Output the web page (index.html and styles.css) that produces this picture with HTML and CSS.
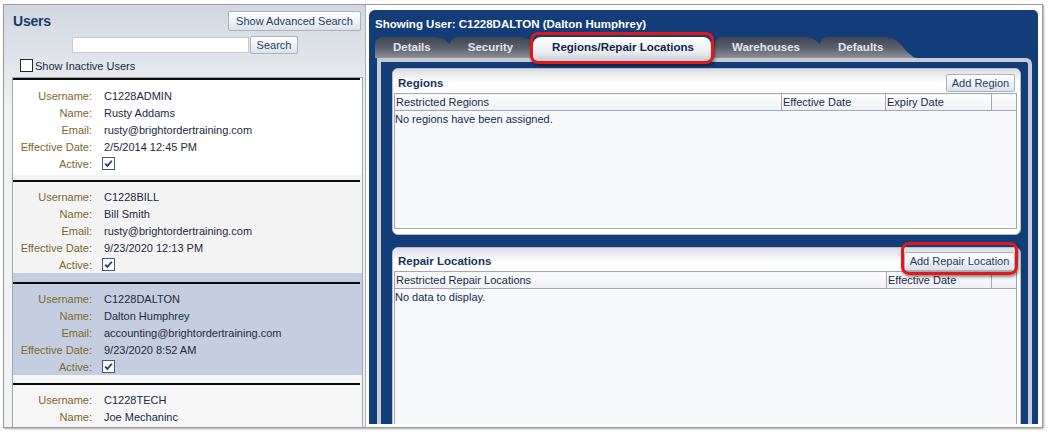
FILE: index.html
```html
<!DOCTYPE html>
<html lang="en">
<head>
<meta charset="utf-8">
<title>Users</title>
<link rel="stylesheet" href="styles.css">
</head>
<body>
<div class="window">
  <aside class="users">
    <div class="users-head">
      <h1 class="users-title">Users</h1>
      <button class="btn btn-adv" type="button">Show Advanced Search</button>
    </div>
    <div class="search-row">
      <input class="search-input" type="text">
      <button class="btn btn-search" type="button">Search</button>
    </div>
    <label class="inactive"><span class="cb"></span>Show Inactive Users</label>
    <div class="list">
      <div class="rec rec1">
        <div class="sep"></div>
        <div class="fields">
          <span class="lbl">Username:</span><span class="val">C1228ADMIN</span>
          <span class="lbl">Name:</span><span class="val">Rusty Addams</span>
          <span class="lbl">Email:</span><span class="val">rusty@brightordertraining.com</span>
          <span class="lbl">Effective Date:</span><span class="val">2/5/2014 12:45 PM</span>
          <span class="lbl">Active:</span><span class="val"><span class="chk"><svg viewBox="0 0 11 11" width="11" height="11"><path d="M2.2 5.6 L4.4 7.9 L8.9 2.8" fill="none" stroke="#2d3b55" stroke-width="1.7"/></svg></span></span>
        </div>
      </div>
      <div class="rec rec2">
        <div class="sep"></div>
        <div class="fields">
          <span class="lbl">Username:</span><span class="val">C1228BILL</span>
          <span class="lbl">Name:</span><span class="val">Bill Smith</span>
          <span class="lbl">Email:</span><span class="val">rusty@brightordertraining.com</span>
          <span class="lbl">Effective Date:</span><span class="val">9/23/2020 12:13 PM</span>
          <span class="lbl">Active:</span><span class="val"><span class="chk"><svg viewBox="0 0 11 11" width="11" height="11"><path d="M2.2 5.6 L4.4 7.9 L8.9 2.8" fill="none" stroke="#2d3b55" stroke-width="1.7"/></svg></span></span>
        </div>
      </div>
      <div class="rec rec3">
        <div class="sep"></div>
        <div class="fields">
          <span class="lbl">Username:</span><span class="val">C1228DALTON</span>
          <span class="lbl">Name:</span><span class="val">Dalton Humphrey</span>
          <span class="lbl">Email:</span><span class="val">accounting@brightordertraining.com</span>
          <span class="lbl">Effective Date:</span><span class="val">9/23/2020 8:52 AM</span>
          <span class="lbl">Active:</span><span class="val"><span class="chk"><svg viewBox="0 0 11 11" width="11" height="11"><path d="M2.2 5.6 L4.4 7.9 L8.9 2.8" fill="none" stroke="#2d3b55" stroke-width="1.7"/></svg></span></span>
        </div>
      </div>
      <div class="rec rec4">
        <div class="sep"></div>
        <div class="fields">
          <span class="lbl">Username:</span><span class="val">C1228TECH</span>
          <span class="lbl">Name:</span><span class="val">Joe Mechaninc</span>
        </div>
      </div>
    </div>
  </aside>

  <main class="detail">
    <div class="detail-title">Showing User: C1228DALTON (Dalton Humphrey)</div>
    <nav class="tabs">
      <span class="tab tab-details">Details</span>
      <span class="tab tab-security">Security</span>
      <span class="tab active">Regions/Repair Locations<span class="hl hl-tab"></span></span>
      <span class="tab tab-wh">Warehouses</span>
      <span class="tab tab-def">Defaults</span>
    </nav>
    <div class="frame">
      <section class="panel panel-regions">
        <div class="panel-head">
          <h2 class="panel-title">Regions</h2>
          <button class="btn btn-add-region" type="button">Add Region</button>
        </div>
        <table class="grid grid-regions">
          <colgroup><col class="c-rr"><col class="c-eff"><col class="c-exp"><col></colgroup>
          <thead><tr><th>Restricted Regions</th><th>Effective Date</th><th>Expiry Date</th><th></th></tr></thead>
          <tbody><tr><td colspan="4">No regions have been assigned.</td></tr></tbody>
        </table>
      </section>
      <section class="panel panel-repair">
        <div class="panel-head head-repair">
          <h2 class="panel-title">Repair Locations</h2>
          <span class="hl-wrap"><button class="btn btn-add-repair" type="button">Add Repair Location</button><span class="hl hl-btn"></span></span>
        </div>
        <table class="grid grid-repair">
          <colgroup><col class="c-rl"><col class="c-eff2"><col></colgroup>
          <thead><tr><th>Restricted Repair Locations</th><th>Effective Date</th><th></th></tr></thead>
          <tbody><tr><td colspan="3">No data to display.</td></tr></tbody>
        </table>
      </section>
    </div>
  </main>
</div>
</body>
</html>
```
FILE: styles.css
```css
* { box-sizing: border-box; }
html, body { margin: 0; padding: 0; background: #fff; }
body {
  width: 1048px;
  height: 432px;
  overflow: hidden;
  font-family: "Liberation Sans", Arial, sans-serif;
  font-size: 11px;
  color: #1c2b44;
}

.window {
  margin: 4px 0 0 3px;
  width: 1040px;
  height: 424px;
  border: 1px solid #9b9b9b;
  box-shadow: 1px 1px 2px rgba(0, 0, 0, 0.35);
  background: #fff;
  display: flex;
  overflow: hidden;
}

/* ---------- left: users ---------- */
.users {
  width: 362px;
  flex: none;
  border-right: 1px solid #aab0b8;
  background: linear-gradient(#d2d7e0 0, #e6e9ed 72px, #f1f2f3 100px, #f1f2f3 100%);
  display: flex;
  flex-direction: column;
  overflow: hidden;
}
.users-head {
  display: flex;
  justify-content: space-between;
  align-items: center;
  padding: 6px 4px 0 9px;
  height: 26px;
}
.users-title {
  margin: 0;
  font-size: 14px;
  font-weight: bold;
  color: #1b3a6b;
  letter-spacing: -0.2px;
}
.btn {
  font-family: "Liberation Sans", Arial, sans-serif;
  font-size: 11px;
  color: #233d66;
  background: linear-gradient(#ffffff, #eef1f5 55%, #dce1e8);
  border: 1px solid #a8b2c0;
  border-radius: 2px;
  padding: 0;
  height: 18px;
  line-height: 16px;
  text-align: center;
}
.btn-adv { width: 133px; height: 20px; line-height: 18px; }
.search-row {
  display: flex;
  justify-content: center;
  align-items: center;
  gap: 1px;
  margin-top: 5px;
  height: 18px;
  padding-left: 1px;
}
.search-input {
  width: 177px;
  height: 16px;
  border: 1px solid #c6cad0;
  background: #fff;
  padding: 0;
  margin: 0;
}
.btn-search { width: 48px; }
.inactive {
  display: flex;
  align-items: center;
  margin: 5px 0 0 16px;
  height: 13px;
  color: #1d2b44;
}
.cb {
  width: 13px;
  height: 13px;
  border: 1px solid #262626;
  background: #fff;
  margin-right: 2px;
  flex: none;
}
.list {
  margin: 5px 0 0 8px;
  width: 351px;
  flex: 1;
  border: 1px solid #a3a7ad;
  border-bottom: 0;
  background: #f6f6f6;
  overflow: hidden;
}
.rec { padding-bottom: 0; }
.rec1 { background: #ffffff; padding-bottom: 3px; }
.rec2 { background: #f4f4f4; padding-top: 5px; }
.rec3 { background: #c5cee0; padding-top: 9px; }
.rec4 { background: #f6f6f6; padding-top: 8px; }
.sep { height: 2px; background: #0a0a0a; margin-right: 2px; }
.fields {
  display: grid;
  grid-template-columns: 79px 1fr;
  column-gap: 12px;
  grid-auto-rows: 17px;
  align-items: center;
  padding-top: 6px;
}
.rec1 .fields { padding-top: 7px; }
.lbl { text-align: right; color: #7a6a2f; white-space: nowrap; }
.val { color: #1d2a40; white-space: nowrap; display: flex; align-items: center; }
.chk {
  width: 13px;
  height: 13px;
  margin-left: -2px;
  border: 1px solid #4b5a78;
  background: #fbfcfd;
  display: flex;
  align-items: center;
  justify-content: center;
}
.chk svg { display: block; }

/* ---------- right: detail ---------- */
.detail {
  width: 669px;
  height: 414px;
  flex: none;
  margin: 5px 0 0 3px;
  background: #133d78;
  border-radius: 6px 5px 0 0;
  display: flex;
  flex-direction: column;
  overflow: hidden;
}
.detail-title {
  padding: 7px 0 0 6px;
  height: 21px;
  line-height: 14px;
  font-weight: bold;
  color: #ffffff;
  font-size: 11.5px;
}
.tabs {
  display: flex;
  align-items: flex-start;
  height: 21px;
  margin: 6px 0 0 6px;
  flex: none;
}
.tab {
  height: 21px;
  line-height: 21px;
  padding: 0 33px 0 18px;
  margin-right: -16px;
  font-weight: bold;
  font-size: 11.5px;
  color: #e1e6ee;
  white-space: nowrap;
  background: linear-gradient(#3f4551, #5a606b 50%, #8b9099);
  border-top-left-radius: 8px;
  clip-path: polygon(0 0, calc(100% - 30px) 0, calc(100% - 22px) 2px, calc(100% - 16px) 7px, calc(100% - 9px) 15px, calc(100% - 3px) 20px, 100% 21px, 0 21px);
}
.tab-details { padding-right: 35px; }
.tab-security { padding-right: 38px; }
.tab-wh { padding-right: 36px; }
.tab.active {
  position: relative;
  z-index: 2;
  height: 24px;
  margin-left: -2px;
  margin-right: 3px;
  padding: 0 17px 0 19px;
  clip-path: none;
  border-radius: 8px 8px 0 0;
  color: #0f2650;
  background: linear-gradient(#ffffff, #eceef1 60%, #c8cdd5);
}
.hl {
  position: absolute;
  border: 3px solid #e3161c;
  border-radius: 8px;
  box-shadow: 1px 2px 3px rgba(0, 0, 0, 0.45);
  pointer-events: none;
}
.hl-tab { left: -3px; right: -3px; top: -5px; bottom: -3px; }

.frame {
  flex: 1;
  margin: 0 6px 0 8px;
  border: 4px solid #c6cbd3;
  border-bottom: 0;
  border-top-right-radius: 6px;
  padding: 6px 7px 0 11px;
  overflow: hidden;
}
.panel {
  background: #ffffff;
  border: 1px solid #b7bcc5;
  border-radius: 6px;
}
.panel-regions { height: 167px; padding-bottom: 5px; }
.panel-repair { margin-top: 12px; height: 240px; }
.panel-head {
  display: flex;
  justify-content: space-between;
  align-items: center;
  height: 24px;
  padding: 4px 5px 0 5px;
  background: linear-gradient(#d9dde4, #f6f7f9 10px, #ffffff 14px);
  border-radius: 6px 6px 0 0;
}
.head-repair { height: 23px; padding-top: 3px; }
.panel-title {
  margin: 0;
  font-size: 11.5px;
  font-weight: bold;
  color: #16325e;
}
.btn-add-region { width: 69px; }
.btn-add-repair { width: 111px; height: 19px; line-height: 17px; }
.hl-wrap { position: relative; display: flex; }
.hl-btn { left: -3px; right: -3px; top: -10px; bottom: -4px; }

.grid {
  border-collapse: collapse;
  table-layout: fixed;
  margin: 0 3px 0 1px;
  width: 623px;
  background: #f8f9fb;
  border: 1px solid #a2a8b1;
}
.grid-regions { height: 136px; }
.grid-repair { height: 200px; }
.grid th {
  height: 17px;
  padding: 0 0 0 1px;
  text-align: left;
  font-weight: normal;
  color: #1b2c48;
  background: linear-gradient(#fdfdfe, #eef0f3);
  border-bottom: 1px solid #a2a8b1;
  border-left: 1px solid #a2a8b1;
  white-space: nowrap;
  overflow: hidden;
  line-height: 16px;
}
.grid th:first-child { border-left: 0; }
.grid td {
  vertical-align: top;
  padding: 0;
  line-height: 16px;
  color: #0f2d56;
}
.c-rr { width: 387px; }
.c-eff { width: 104px; }
.c-exp { width: 106px; }
.c-rl { width: 492px; }
.c-eff2 { width: 105px; }
```
